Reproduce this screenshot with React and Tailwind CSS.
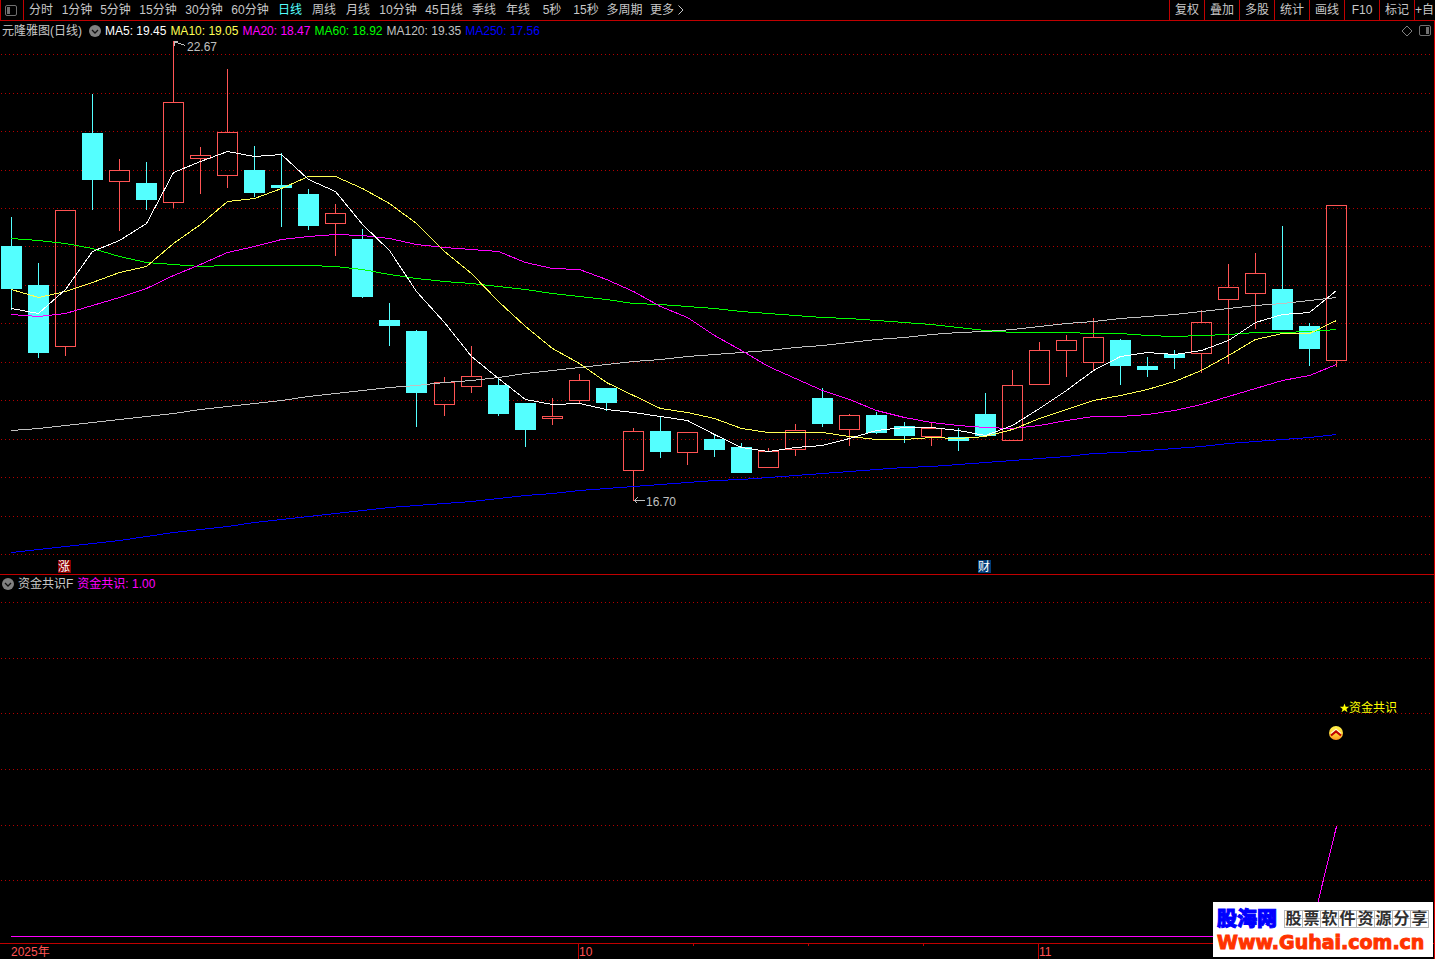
const FONT = '[font-family:"Liberation_Sans","Noto_Sans_CJK_SC",sans-serif]';

const periods = [
  ["分时", "w-[34px]"],
  ["1分钟", "w-[38px]"],
  ["5分钟", "w-[39px]"],
  ["15分钟", "w-[46px]"],
  ["30分钟", "w-[46px]"],
  ["60分钟", "w-[46px]"],
  ["日线", "w-[34px]"],
  ["周线", "w-[34px]"],
  ["月线", "w-[34px]"],
  ["10分钟", "w-[46px]"],
  ["45日线", "w-[46px]"],
  ["季线", "w-[34px]"],
  ["年线", "w-[34px]"],
  ["5秒", "w-[34px]"],
  ["15秒", "w-[34px]"],
  ["多周期", "w-[43px]"],
];

const tools = ["复权", "叠加", "多股", "统计", "画线", "F10", "标记"];

const averages = [
  ["MA5: 19.45", "text-white"],
  ["MA10: 19.05", "text-[#ffff54]"],
  ["MA20: 18.47", "text-[#ff00ff]"],
  ["MA60: 18.92", "text-[#00ff00]"],
  ["MA120: 19.35", "text-[#c0c0c0]"],
  ["MA250: 17.56", "text-[#0000ff]"],
];

// [kind, high, body top, body bottom, low]; "u" = rising (hollow), "d" = falling (filled)
const candles = [
  ["d", 217, 246, 289, 310],
  ["d", 263, 285, 353, 358],
  ["u", 210, 210, 346, 356],
  ["d", 94, 133, 180, 210],
  ["u", 159, 170, 181, 231],
  ["d", 162, 183, 200, 210],
  ["u", 41, 102, 202, 208],
  ["u", 147, 155, 158, 194],
  ["u", 69, 132, 175, 188],
  ["d", 146, 170, 193, 197],
  ["d", 153, 185, 188, 227],
  ["d", 189, 194, 226, 230],
  ["u", 204, 213, 223, 256],
  ["d", 229, 239, 297, 298],
  ["d", 303, 320, 326, 346],
  ["d", 330, 331, 393, 427],
  ["u", 377, 382, 404, 416],
  ["u", 346, 376, 386, 393],
  ["d", 377, 385, 414, 416],
  ["d", 403, 403, 430, 447],
  ["u", 398, 416, 418, 425],
  ["u", 374, 380, 400, 404],
  ["d", 388, 388, 403, 411],
  ["u", 428, 431, 470, 501],
  ["d", 416, 431, 452, 458],
  ["u", 432, 432, 452, 465],
  ["d", 434, 439, 450, 457],
  ["d", 443, 447, 473, 473],
  ["u", 448, 451, 467, 467],
  ["u", 424, 430, 449, 456],
  ["d", 388, 398, 424, 427],
  ["u", 414, 415, 429, 446],
  ["d", 412, 415, 433, 434],
  ["d", 422, 426, 436, 443],
  ["u", 423, 428, 436, 446],
  ["d", 428, 437, 441, 451],
  ["d", 393, 414, 436, 436],
  ["u", 370, 385, 440, 440],
  ["u", 342, 350, 384, 384],
  ["u", 335, 340, 350, 377],
  ["u", 318, 337, 362, 371],
  ["d", 339, 340, 366, 385],
  ["d", 357, 366, 370, 377],
  ["d", 350, 354, 358, 369],
  ["u", 310, 322, 353, 373],
  ["u", 264, 287, 299, 364],
  ["u", 253, 273, 293, 329],
  ["d", 226, 289, 330, 330],
  ["d", 323, 326, 349, 366],
  ["u", 205, 205, 360, 367],
];

const lines = [
  ["#0000ff", [552, 549, 546, 543, 540, 536, 532, 529, 526, 522, 519, 516, 513, 510, 507, 505, 503, 501, 498, 495, 493, 490, 488, 486, 484, 482, 480, 479, 477, 475, 473, 471, 469, 467, 466, 464, 462, 460, 458, 456, 453, 452, 450, 448, 446, 443, 441, 439, 437, 434]],
  ["#c0c0c0", [430, 428, 425, 422, 419, 416, 413, 409, 406, 403, 400, 396, 393, 390, 387, 385, 382, 380, 377, 373, 370, 367, 364, 361, 359, 356, 354, 352, 350, 347, 345, 342, 339, 337, 334, 332, 331, 329, 326, 323, 321, 318, 316, 314, 311, 308, 305, 303, 300, 297]],
  ["#00ff00", [238, 240, 243, 248, 256, 262, 264, 266, 265, 265, 265, 265, 266, 269, 274, 278, 281, 283, 286, 289, 293, 296, 299, 303, 304, 306, 308, 311, 313, 315, 317, 318, 320, 322, 324, 327, 330, 332, 332, 332, 333, 333, 335, 336, 335, 334, 332, 332, 331, 329]],
  ["#ff00ff", [314, 316, 313, 305, 297, 288, 275, 264, 252, 246, 239, 236, 234, 235, 238, 244, 247, 249, 251, 262, 268, 269, 279, 291, 306, 317, 335, 350, 366, 378, 390, 399, 410, 417, 422, 425, 427, 428, 425, 420, 416, 416, 414, 410, 404, 396, 388, 380, 375, 364]],
  ["#ffff54", [289, 297, 291, 282, 272, 266, 243, 224, 201, 198, 188, 176, 176, 188, 203, 223, 251, 273, 301, 326, 348, 363, 382, 395, 408, 412, 418, 428, 432, 432, 432, 436, 439, 439, 437, 438, 436, 429, 418, 409, 400, 395, 389, 381, 370, 355, 339, 333, 333, 320]],
  ["#ffffff", [308, 313, 289, 251, 240, 223, 172, 161, 151, 156, 154, 179, 191, 224, 250, 291, 322, 356, 378, 399, 404, 403, 409, 412, 416, 420, 434, 447, 451, 447, 445, 438, 430, 427, 427, 430, 435, 425, 408, 390, 370, 356, 352, 354, 350, 340, 322, 314, 312, 290]],
];

const priceGrid = [54, 93, 131, 170, 208, 246, 285, 323, 362, 400, 439, 477, 516, 554];
const signalGrid = [602, 658, 713, 769, 825, 880];

const xOf = (i) => 11 + 27 * i + Math.floor((i + 1) / 17);

function Grid({ rows }) {
  return rows.map((y) => (
    <line key={y} x1="1" x2="1431" y1={y + 0.5} y2={y + 0.5} stroke="#b40000" strokeDasharray="1 3" />
  ));
}

function Candle({ x, data }) {
  const [kind, high, top, bottom, low] = data;
  if (kind === "d") {
    return (
      <g fill="#54ffff">
        <rect x={x} y={high} width="1" height={low - high} />
        <rect x={x - 10} y={top} width="21" height={bottom - top} />
      </g>
    );
  }
  return (
    <g>
      <rect x={x} y={high} width="1" height={top - high} fill="#ff5454" />
      <rect x={x} y={bottom} width="1" height={low - bottom} fill="#ff5454" />
      <rect x={x - 9.5} y={top + 0.5} width="20" height={bottom - top} fill="none" stroke="#ff5454" />
    </g>
  );
}

function PriceChart() {
  return (
    <svg viewBox="0 40 1434 534" className="block h-auto w-full" role="img" aria-label="日线">
      <g shapeRendering="crispEdges">
        <Grid rows={priceGrid} />
        {candles.map((c, i) => (
          <Candle key={i} x={xOf(i)} data={c} />
        ))}
        {lines.map(([color, ys]) => (
          <polyline
            key={color}
            fill="none"
            stroke={color}
            points={ys.map((y, i) => `${xOf(i) + 0.5},${y + 0.5}`).join(" ")}
          />
        ))}
        <path d="M173.5 42.5h3l9 3M173.5 41.5h4M174.5 42.5v3" fill="none" stroke="#c0c0c0" />
        <path d="M633.5 500.5h11M637.5 497.5l-3 3l3 3" fill="none" stroke="#c0c0c0" />
        <rect x="58" y="560" width="13" height="13" fill="#8c0000" />
        <rect x="978" y="560" width="13" height="13" fill="#003c78" />
      </g>
      <g fontSize="12" fill="#c0c0c0">
        <text x="187" y="51">22.67</text>
        <text x="646" y="506">16.70</text>
      </g>
      <g fontSize="12" fill="#ffffff" textAnchor="middle">
        <text x="64" y="571">涨</text>
        <text x="984" y="571">财</text>
      </g>
    </svg>
  );
}

function SignalChart() {
  return (
    <svg viewBox="0 592 1434 367" className="block h-auto w-full" role="img" aria-label="资金共识">
      <defs>
        <linearGradient id="coin" x1="0" y1="0" x2="0" y2="1">
          <stop offset="0" stopColor="#fff04a" />
          <stop offset="0.5" stopColor="#ffd83a" />
          <stop offset="1" stopColor="#ff9420" />
        </linearGradient>
      </defs>
      <g shapeRendering="crispEdges" fill="none">
        <Grid rows={signalGrid} />
        <polyline points="11,936.5 1309.5,936.5 1336.5,826.5" stroke="#ff00ff" />
        <path d="M0 943.5H1434M578.5 944V959M1038.5 944V959M693.5 944V946M808.5 944V946M923.5 944V946" stroke="#c00000" />
      </g>
      <circle cx="1336" cy="733" r="7" fill="url(#coin)" />
      <path d="M1331 733.5L1336 729.5L1341 733.5" fill="none" stroke="#fff8d0" strokeWidth="1.5" />
      <path d="M1331 735.5L1336 731.5L1341 735.5" fill="none" stroke="#c00000" strokeWidth="2.2" />
      <path d="M1344.5 703.5l1.2 3.3h3.5l-2.8 2.1 1.1 3.4-3-2.1-3 2.1 1.1-3.4-2.8-2.1h3.5z" fill="#ffff00" />
      <g fontSize="12">
        <text x="1349" y="712" fill="#ffff00">资金共识</text>
        <g fill="#ff5454">
          <text x="11" y="956">2025年</text>
          <text x="579" y="956">10</text>
          <text x="1039" y="956">11</text>
        </g>
      </g>
    </svg>
  );
}

function RoundChevron({ label }) {
  return (
    <button type="button" aria-label={label} className="size-3 shrink-0">
      <svg viewBox="0 0 12 12" className="block size-3">
        <circle cx="6" cy="6" r="6" fill="#808080" />
        <path d="M3 5L6 8L9 5" fill="none" stroke="#101010" strokeWidth="1.3" />
      </svg>
    </button>
  );
}

function PanelIcon({ side }) {
  return (
    <svg viewBox="0 0 12 11" className="block h-[11px] w-3">
      <rect x="0.5" y="0.5" width="11" height="10" rx="1.5" fill="none" stroke="#707070" />
      <rect x={side === "left" ? 2 : 7} y="2" width="3" height="7" fill="#707070" />
    </svg>
  );
}

function Toolbar() {
  return (
    <nav className="flex h-[21px] justify-between overflow-hidden border-b border-[#c00000] text-[#c8c8c8]">
      <div className="flex shrink-0">
        <button type="button" aria-label="侧栏" className="flex w-6 items-center border-x border-[#c00000] pl-1">
          <PanelIcon side="left" />
        </button>
        {periods.map(([label, width]) => (
          <button
            key={label}
            type="button"
            className={`${width} whitespace-nowrap text-center ${label === "日线" ? "text-[#54ffff]" : ""}`}
          >
            {label}
          </button>
        ))}
        <button type="button" className="flex items-center gap-1 px-1 whitespace-nowrap">
          更多
          <svg viewBox="0 0 6 10" className="h-[10px] w-[6px]">
            <path d="M0.5 0.5L5 5L0.5 9.5" fill="none" stroke="#c8c8c8" />
          </svg>
        </button>
      </div>
      <div className="flex shrink-0">
        {tools.map((label) => (
          <button key={label} type="button" className="w-[35px] border-l border-[#c00000] text-center">
            {label}
          </button>
        ))}
        <button type="button" className="w-[21px] border-l border-[#c00000] text-left whitespace-nowrap">
          +自
        </button>
      </div>
    </nav>
  );
}

function Watermark() {
  return (
    <a
      href="#guhai"
      className="absolute right-px bottom-0.5 flex h-[55px] w-[220px] flex-col justify-center bg-white px-1 whitespace-nowrap"
    >
      <span className="flex h-6 items-center justify-between">
        <span className="text-xl leading-6 font-black text-[#0000ff] [-webkit-text-stroke:1px_#0000ff]">股海网</span>
        <span className="flex border-y border-l border-[#b8b8b8] bg-[linear-gradient(#c4c4c4,#c4c4c4)] bg-[length:100%_1px] bg-center bg-no-repeat text-base leading-4 font-bold text-[#303030]">
          {[..."股票软件资源分享"].map((ch) => (
            <span key={ch} className="w-[18px] border-r border-[#b8b8b8] text-center">
              {ch}
            </span>
          ))}
        </span>
      </span>
      <span className='text-[19px] leading-[22px] font-bold text-[#ff3300] [-webkit-text-stroke:1px_#ff3300] [font-family:"DejaVu_Sans",sans-serif]'>
        Www.Guhai.com.cn
      </span>
    </a>
  );
}

export default function App() {
  return (
    <div className={`min-h-screen overflow-hidden bg-black text-xs ${FONT}`}>
      <Toolbar />
      <main className="relative border-r border-[#d80000]">
        <header className="flex h-[19px] items-center justify-between pr-[3px] pl-0.5">
          <div className="flex items-center gap-1 whitespace-nowrap">
            <h1 className="w-[83px] text-[#c8c8c8]">元隆雅图(日线)</h1>
            <RoundChevron label="均线设置" />
            {averages.map(([label, color]) => (
              <span key={label} className={color}>
                {label}
              </span>
            ))}
          </div>
          <div className="flex items-center gap-[6px]">
            <button type="button" aria-label="标记点">
              <svg viewBox="0 0 12 12" className="block size-3">
                <path d="M6 1L11 6L6 11L1 6Z" fill="none" stroke="#808080" />
              </svg>
            </button>
            <button type="button" aria-label="右侧栏">
              <PanelIcon side="right" />
            </button>
          </div>
        </header>
        <PriceChart />
        <section>
          <header className="flex h-[18px] items-center gap-1 border-t border-[#c00000] pl-0.5 whitespace-nowrap">
            <RoundChevron label="指标设置" />
            <h2 className="text-[#c8c8c8]">资金共识F</h2>
            <span className="text-[#ff00ff]">资金共识: 1.00</span>
          </header>
          <SignalChart />
        </section>
        <Watermark />
      </main>
    </div>
  );
}
